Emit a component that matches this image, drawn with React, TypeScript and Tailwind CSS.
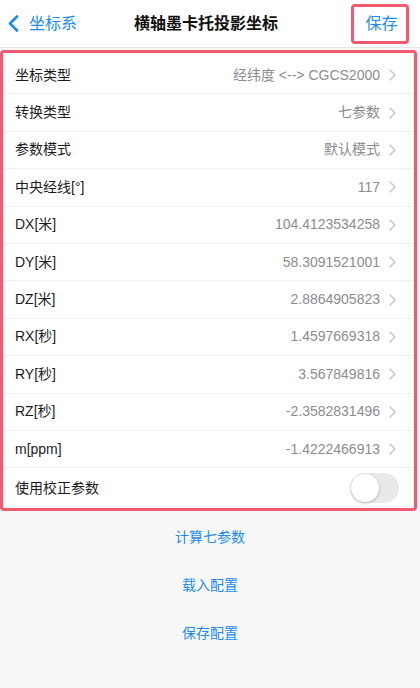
import React from "react";

const rows: { label: string; value: string }[] = [
  { label: "坐标类型", value: "经纬度 <--> CGCS2000" },
  { label: "转换类型", value: "七参数" },
  { label: "参数模式", value: "默认模式" },
  { label: "中央经线[°]", value: "117" },
  { label: "DX[米]", value: "104.4123534258" },
  { label: "DY[米]", value: "58.3091521001" },
  { label: "DZ[米]", value: "2.8864905823" },
  { label: "RX[秒]", value: "1.4597669318" },
  { label: "RY[秒]", value: "3.567849816" },
  { label: "RZ[秒]", value: "-2.3582831496" },
  { label: "m[ppm]", value: "-1.4222466913" },
];

function Chevron() {
  return (
    <svg width="7" height="12" viewBox="0 0 7 12" className="shrink-0">
      <polyline
        points="1,1 6,6 1,11"
        fill="none"
        stroke="#c4c4c8"
        strokeWidth="1.4"
        strokeLinecap="round"
        strokeLinejoin="round"
      />
    </svg>
  );
}

export default function App() {
  return (
    <div
      className="w-[420px] h-[688px] bg-[#f8f8fa] overflow-hidden"
      style={{ fontFamily: '"Liberation Sans", "Noto Sans CJK SC", sans-serif' }}
    >
      {/* Header */}
      <div className="relative h-[48px] bg-white border-b border-[#e4e4e6] flex items-center">
        <div className="flex items-center pl-[8px] text-[#1a8cf0] text-[16px]">
          <svg width="11" height="17" viewBox="0 0 11 17" className="mr-[10px]">
            <polyline
              points="9,1.5 2,8.5 9,15.5"
              fill="none"
              stroke="#1a8cf0"
              strokeWidth="2.6"
              strokeLinecap="round"
              strokeLinejoin="round"
            />
          </svg>
          <span>坐标系</span>
        </div>
        <div className="absolute left-0 right-0 top-0 h-[47px] flex items-center justify-center pointer-events-none">
          <span className="text-[16px] font-bold text-[#111] ml-[-8px]">横轴墨卡托投影坐标</span>
        </div>
        <div className="ml-auto mr-[11px] w-[58px] h-[40px] border-[3px] border-[#f25a6f] rounded-[4px] flex items-center justify-center text-[16px] text-[#1a8cf0] pl-[3px]">
          保存
        </div>
      </div>

      {/* List with highlight */}
      <div className="mt-[2px] w-[417px] border-[3px] border-[#f25a6f] rounded-[4px] bg-white">
        <div className="pt-[4px]">
          {rows.map((r) => (
            <div
              key={r.label}
              className="h-[37.4px] flex items-center pl-[12px] pr-[18px] border-b border-[#f1f1f3] text-[14px]"
            >
              <span className="text-[#1c1c1e]">{r.label}</span>
              <span className="ml-auto mr-[9px] text-[#8c8c90]">{r.value}</span>
              <Chevron />
            </div>
          ))}
          <div className="h-[40px] flex items-center pl-[12px] pr-[15px] text-[14px]">
            <span className="text-[#1c1c1e]">使用校正参数</span>
            <div className="ml-auto relative w-[49px] h-[30px] rounded-full bg-[#e9e9eb]">
              <div className="absolute left-[1px] top-[1px] w-[28px] h-[28px] rounded-full bg-white shadow-[0_1px_3px_rgba(0,0,0,0.25)]" />
            </div>
          </div>
        </div>
      </div>

      {/* Actions */}
      <div className="mt-[2px] flex flex-col items-center text-[14px] text-[#1a8cf0]">
        <div className="h-[48px] flex items-center">计算七参数</div>
        <div className="h-[48px] flex items-center">载入配置</div>
        <div className="h-[48px] flex items-center">保存配置</div>
      </div>
    </div>
  );
}
